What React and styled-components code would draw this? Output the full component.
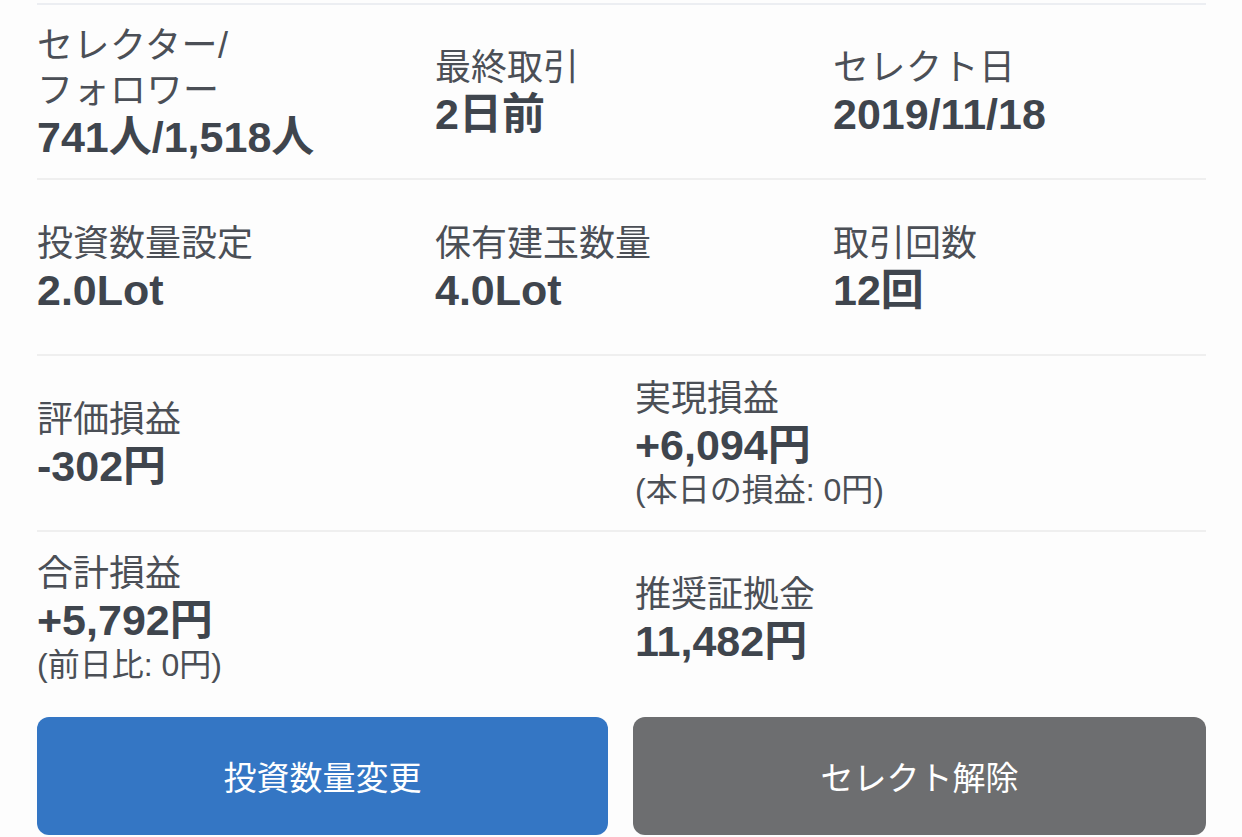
import React from "react";
import styled, { createGlobalStyle } from "styled-components";

const GlobalStyle = createGlobalStyle`
  html, body {
    margin: 0;
    padding: 0;
    background: #fdfdfd;
  }
  body {
    font-family: "Liberation Sans", "Noto Sans CJK JP", sans-serif;
  }
`;

const Page = styled.div`
  width: 1242px;
  height: 837px;
  overflow: hidden;
  box-sizing: border-box;
  padding: 3px 36px 0 37px;
  display: flex;
  flex-direction: column;
`;

const TopRule = styled.div`
  height: 2px;
  background: #eceef2;
`;

const Row = styled.div`
  display: grid;
  grid-template-columns: ${(p) => (p.$cols === 3 ? "398px 398px 1fr" : "598px 1fr")};
  align-items: center;
  height: ${(p) => p.$height}px;
  border-bottom: ${(p) => (p.$last ? "none" : "2px solid #efefef")};
`;

const Cell = styled.div`
  display: flex;
  flex-direction: column;
`;

const Label = styled.div`
  font-size: 36px;
  line-height: 45px;
  color: #4b4f56;
  letter-spacing: ${(p) => (p.$wide ? "0.5px" : "0")};
`;

const Value = styled.div`
  font-size: 43px;
  line-height: 48px;
  font-weight: 700;
  color: #3f454d;
`;

const Sub = styled.div`
  font-size: 32px;
  line-height: 42px;
  color: #4b4f56;
`;

const Buttons = styled.div`
  display: grid;
  grid-template-columns: 571px 1fr;
  gap: 25px;
  margin-top: 12px;
`;

const Button = styled.button`
  height: 118px;
  border: none;
  border-radius: 12px;
  background: ${(p) => (p.$variant === "primary" ? "#3476c4" : "#6d6e70")};
  color: #ffffff;
  font-family: "Noto Sans CJK JP", sans-serif;
  font-size: 33px;
  font-weight: 400;
  cursor: pointer;
`;

const Item = ({ label, value, sub, wide }) => (
  <Cell>
    <Label $wide={wide}>{label}</Label>
    <Value>{value}</Value>
    {sub && <Sub>{sub}</Sub>}
  </Cell>
);

export default function App() {
  return (
    <>
      <GlobalStyle />
      <Page>
        <TopRule />
        <Row $cols={3} $height={173}>
          <Item
            wide
            label={
              <>
                セレクター/
                <br />
                フォロワー
              </>
            }
            value="741人/1,518人"
          />
          <Item label="最終取引" value="2日前" />
          <Item wide label="セレクト日" value="2019/11/18" />
        </Row>
        <Row $cols={3} $height={174}>
          <Item label="投資数量設定" value="2.0Lot" />
          <Item label="保有建玉数量" value="4.0Lot" />
          <Item label="取引回数" value="12回" />
        </Row>
        <Row $cols={2} $height={174}>
          <Item label="評価損益" value="-302円" />
          <Item label="実現損益" value="+6,094円" sub="(本日の損益: 0円)" />
        </Row>
        <Row $cols={2} $height={173} $last>
          <Item label="合計損益" value="+5,792円" sub="(前日比: 0円)" />
          <Item label="推奨証拠金" value="11,482円" />
        </Row>
        <Buttons>
          <Button $variant="primary">投資数量変更</Button>
          <Button>セレクト解除</Button>
        </Buttons>
      </Page>
    </>
  );
}
